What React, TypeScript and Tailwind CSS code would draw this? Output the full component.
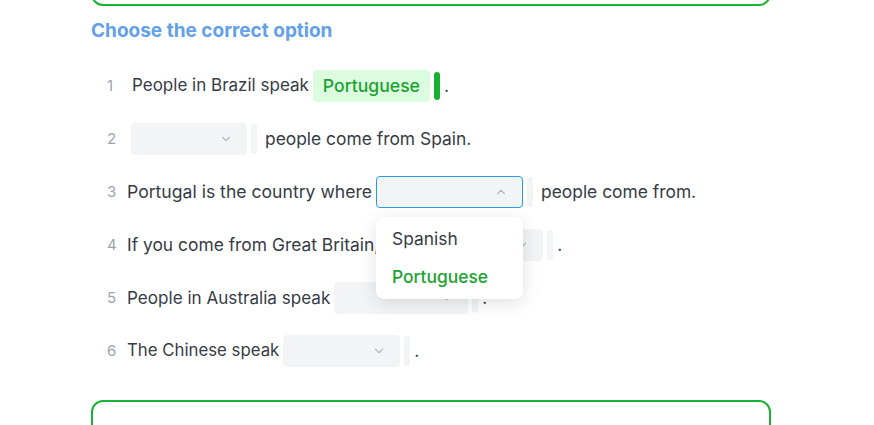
import { ChevronDown, ChevronUp } from "lucide-react";

function Select({ width, open = false }: { width: number; open?: boolean }) {
  return (
    <span className="inline-flex items-center gap-[4px] align-middle">
      <span
        className={`relative inline-flex h-[32px] items-center justify-end rounded-[4px] bg-[#f3f4f6] pr-[14px] ${
          open ? "border border-[#2b9be0]" : ""
        }`}
        style={{ width }}
      >
        {open ? (
          <ChevronUp className="h-[14px] w-[14px] text-[#b6bac1]" strokeWidth={2} />
        ) : (
          <ChevronDown className="h-[14px] w-[14px] text-[#b6bac1]" strokeWidth={2} />
        )}
      </span>
      <span className="inline-block h-[30px] w-[6px] rounded-[3px] bg-[#f3f4f6]" />
    </span>
  );
}

function Row({ n, children, pad = 0 }: { n: number; children: React.ReactNode; pad?: number }) {
  return (
    <div className="flex h-[32px] items-center">
      <span className="w-[36px] pl-[16px] text-[15px] text-[#9ca3af]">{n}</span>
      <div className="flex items-center gap-[4px] text-[17.4px] text-[#373b45]" style={{ paddingLeft: pad }}>
        {children}
      </div>
    </div>
  );
}

export default function App() {
  return (
    <div className="min-h-[425px] w-full overflow-hidden bg-white" style={{ fontFamily: "Inter, 'Noto Sans', sans-serif" }}>
      <div className="ml-[91px] w-[680px]">
        <div className="mt-[-30px] h-[36px] rounded-[12px] border-2 border-[#1cb034]" />
        <h2 className="mt-[13px] text-[19px] font-bold leading-[24px] text-[#62a0ea]">Choose the correct option</h2>
        <div className="mt-[27px] flex flex-col gap-[21px]">
          <Row n={1} pad={5}>
            <span className="text-[17px]">People in Brazil speak</span>
            <span className="inline-flex h-[32px] items-center rounded-[4px] bg-[#dcfce0] px-[10px] text-[17.6px] font-medium text-[#1aa32f]">
              Portuguese
            </span>
            <span className="inline-block h-[28px] w-[6px] rounded-[3px] bg-[#16b22f]" />
            <span>.</span>
          </Row>
          <Row n={2} pad={4}>
            <Select width={116} />
            <span className="ml-[4px]">people come from Spain.</span>
          </Row>
          <Row n={3}>
            <span className="text-[17.6px]">Portugal is the country where</span>
            <span className="relative inline-flex">
              <Select width={147} open />
              <div className="absolute left-0 top-[41px] z-10 w-[147px] rounded-[8px] bg-white py-[3px] shadow-[0_4px_18px_rgba(0,0,0,0.12)]">
                <div className="px-[16px] py-[5px] text-[17.4px] leading-[28px] text-[#373b45]">Spanish</div>
                <div className="px-[16px] py-[5px] text-[17.4px] font-medium leading-[28px] text-[#1aa32f]">Portuguese</div>
              </div>
            </span>
            <span className="ml-[4px]">people come from.</span>
          </Row>
          <Row n={4}>
            <span>If you come from Great Britain,</span>
            <Select width={160} />
            <span>.</span>
          </Row>
          <Row n={5}>
            <span className="text-[17.1px]">People in Australia speak</span>
            <Select width={134} />
            <span>.</span>
          </Row>
          <Row n={6}>
            <span className="text-[16.8px]">The Chinese speak</span>
            <Select width={117} />
            <span>.</span>
          </Row>
        </div>
        <div className="mt-[33px] h-[60px] rounded-[12px] border-2 border-[#1cb034]" />
      </div>
    </div>
  );
}
